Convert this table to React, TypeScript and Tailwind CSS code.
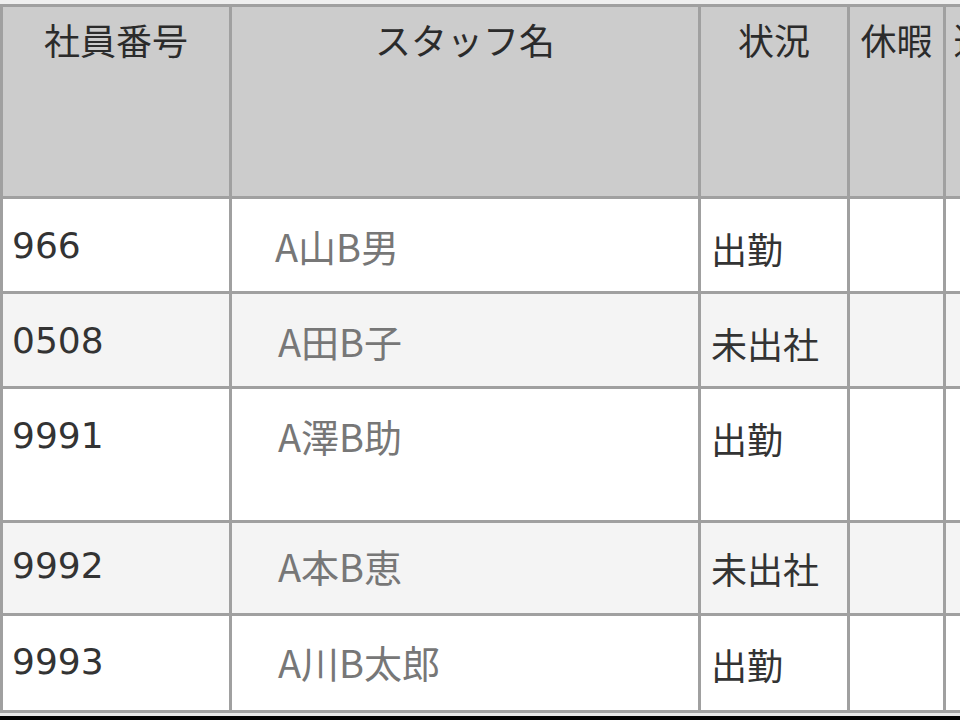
type Staff = {
  id: string;
  name: string;
  status: string;
  rowClass: string;
  nameClass: string;
  padClass: string;
};

const staff: Staff[] = [
  { id: "966", name: "A山B男", status: "出勤", rowClass: "h-[95px] bg-white", nameClass: "pl-[43px]", padClass: "pt-[25px]" },
  { id: "0508", name: "A田B子", status: "未出社", rowClass: "h-[95px] bg-[#f4f4f4]", nameClass: "pl-[46px]", padClass: "pt-[25px]" },
  { id: "9991", name: "A澤B助", status: "出勤", rowClass: "h-[134px] bg-white", nameClass: "pl-[46px]", padClass: "pt-[25px]" },
  { id: "9992", name: "A本B恵", status: "未出社", rowClass: "h-[93px] bg-[#f4f4f4]", nameClass: "pl-[46px]", padClass: "pt-[21px]" },
  { id: "9993", name: "A川B太郎", status: "出勤", rowClass: "h-[97px] bg-white", nameClass: "pl-[46px]", padClass: "pt-[24px]" },
];

const cell = "shrink-0 border-r-[3px] border-[#a0a0a0]";

export default function App() {
  return (
    <div className="w-[960px] h-[720px] overflow-hidden bg-white flex flex-col text-[36px] leading-[44px] text-[#333] font-['Noto_Sans_CJK_JP',sans-serif]">
      <div className="h-[4px] shrink-0 bg-[#efefef]" />

      <div className="flex flex-col border-t-[3px] border-l-[3px] border-[#a0a0a0] w-[1100px]">
        {/* header */}
        <div className="flex h-[192px] shrink-0 bg-[#cccccc] border-b-[3px] border-[#a0a0a0] text-center text-[#2b2b2b]">
          <div className={`${cell} w-[229px] pt-[10px]`}>社員番号</div>
          <div className={`${cell} w-[469px] pt-[10px]`}>スタッフ名</div>
          <div className={`${cell} w-[149px] pt-[10px]`}>状況</div>
          <div className={`${cell} w-[96px] pt-[10px]`}>休暇</div>
          <div className={`${cell} w-[90px] pt-[10px]`}>遅刻</div>
        </div>

        {staff.map((s) => (
          <div key={s.id} className={`flex shrink-0 border-b-[3px] border-[#a0a0a0] ${s.rowClass}`}>
            <div className={`${cell} w-[229px] pl-[9px] font-['DejaVu_Sans','Noto_Sans_CJK_JP',sans-serif] ${s.padClass}`}>
              {s.id}
            </div>
            <div className={`${cell} w-[469px] text-[38px] text-[#777] ${s.nameClass} ${s.padClass}`}>{s.name}</div>
            <div className={`${cell} w-[149px] pl-[10px] ${s.padClass}`}>
              <div className="pt-[2px]">{s.status}</div>
            </div>
            <div className={`${cell} w-[96px]`} />
            <div className={`${cell} w-[90px]`} />
          </div>
        ))}
      </div>

      <div className="h-[3px] shrink-0 bg-[#e6e6e6]" />
      <div className="flex-1 bg-black" />
    </div>
  );
}
